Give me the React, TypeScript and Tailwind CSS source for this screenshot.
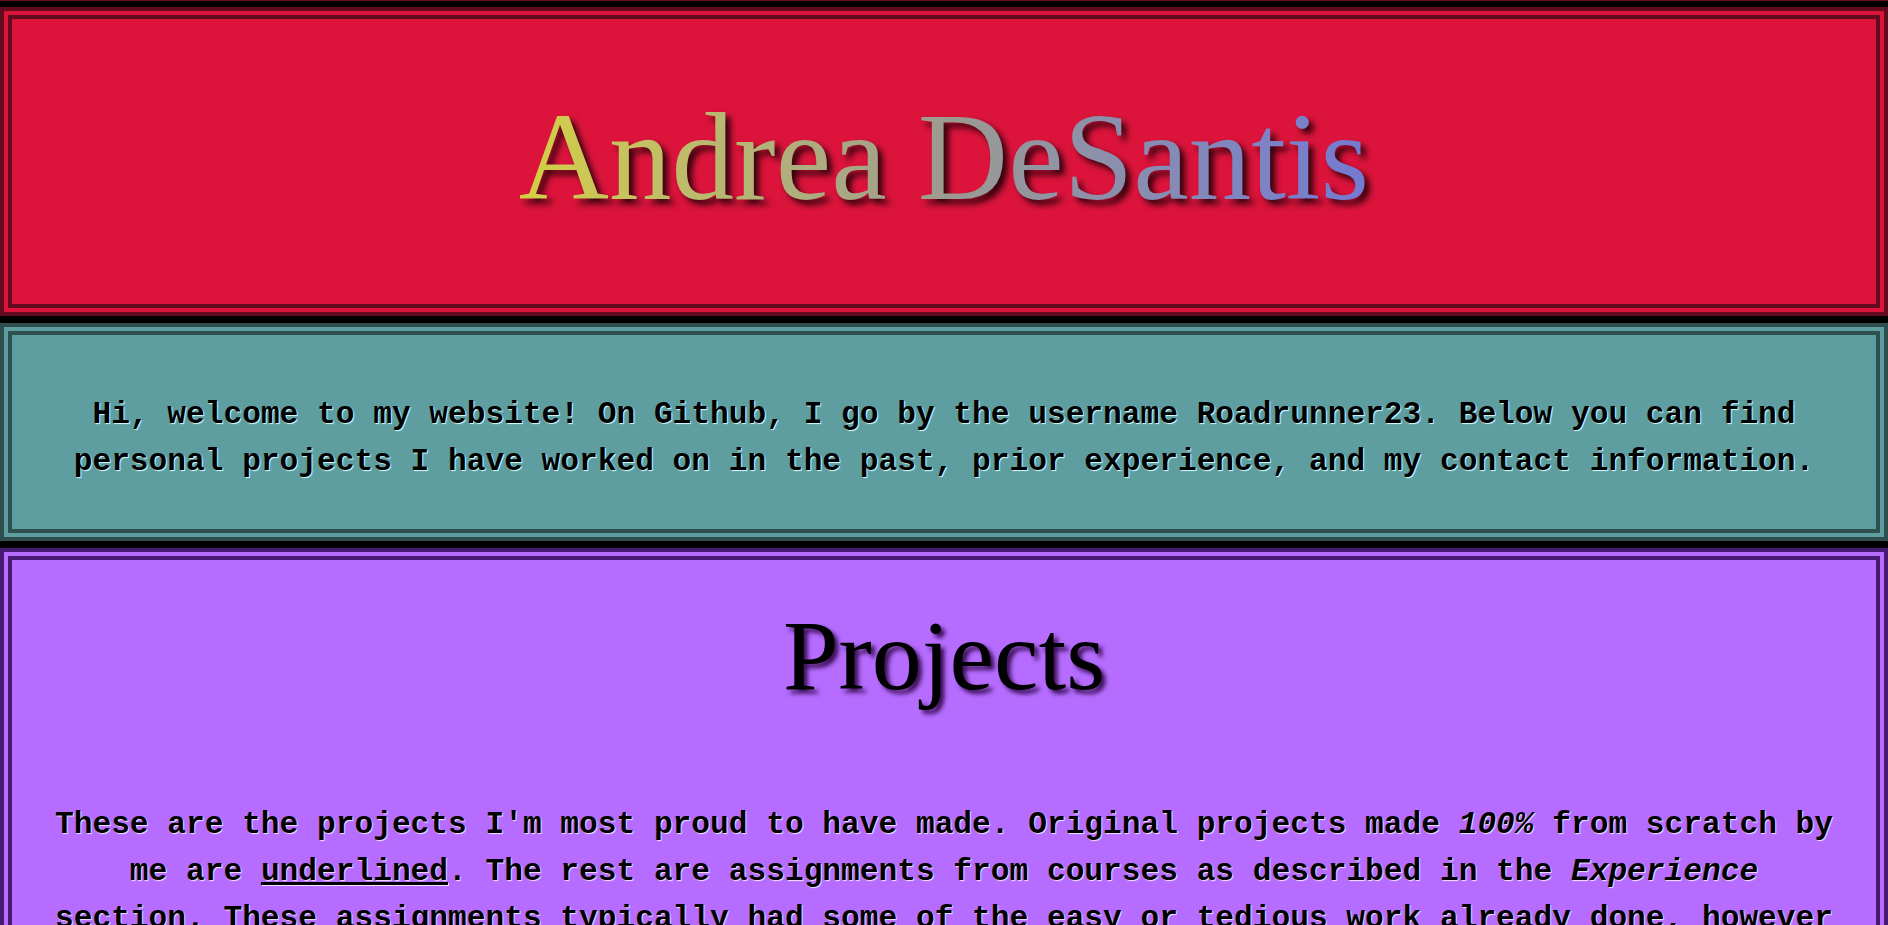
export default function App() {
  const mono = "font-['Liberation_Mono','Courier_New',monospace] font-bold text-[31.2px] leading-[47px] text-black text-center"

  return (
    <div className="min-h-screen bg-black">
      {/* sliver of the element above */}
      <div className="h-px bg-[#6b0d1f]" />

      <div className="flex flex-col gap-[7px] pt-[6px]">
        {/* Header */}
        <header className="border-[12px] border-double border-[#620b1f] bg-[#dc143c] pt-[67px] pb-[74px] text-center">
          <h1 className="font-['Liberation_Serif','Times_New_Roman',serif] text-[125px] leading-[1.15] font-normal">
            <span className="inline-block bg-gradient-to-r from-[#d4d040] via-[#9c9b90] to-[#7479d2] bg-clip-text text-transparent [filter:drop-shadow(5px_5px_3px_rgba(30,0,5,0.9))]">
              Andrea DeSantis
            </span>
          </h1>
        </header>

        {/* Intro */}
        <section className="border-[12px] border-double border-[#2f4f4f] bg-[#5f9ea0] px-[38px] pt-[56px] pb-[44px]">
          <p className={`${mono} [text-shadow:1px_1px_1px_#d8ffff]`}>
            Hi, welcome to my website! On Github, I go by the username Roadrunner23. Below you can find
            personal projects I have worked on in the past, prior experience, and my contact information.
          </p>
        </section>

        {/* Projects */}
        <section className="border-[12px] border-double border-[#461a72] bg-[#b56cff] px-[38px] pt-[38px] pb-10">
          <h2 className="font-['Liberation_Serif','Times_New_Roman',serif] text-[100px] leading-[1.15] font-normal text-black text-center [text-shadow:4px_4px_4px_rgba(40,0,60,0.85)]">
            Projects
          </h2>
          <p className={`${mono} mt-[88px] [text-shadow:1px_1px_1px_#f3e4ff]`}>
            These are the projects I'm most proud to have made. Original projects made <em>100%</em> from scratch by
            me are <span className="underline">underlined</span>. The rest are assignments from courses as described in the <em>Experience</em> section.
            These assignments typically had some of the easy or tedious work already done, however the core
            functionality and design of each one was written by me.
          </p>
        </section>
      </div>
    </div>
  )
}
